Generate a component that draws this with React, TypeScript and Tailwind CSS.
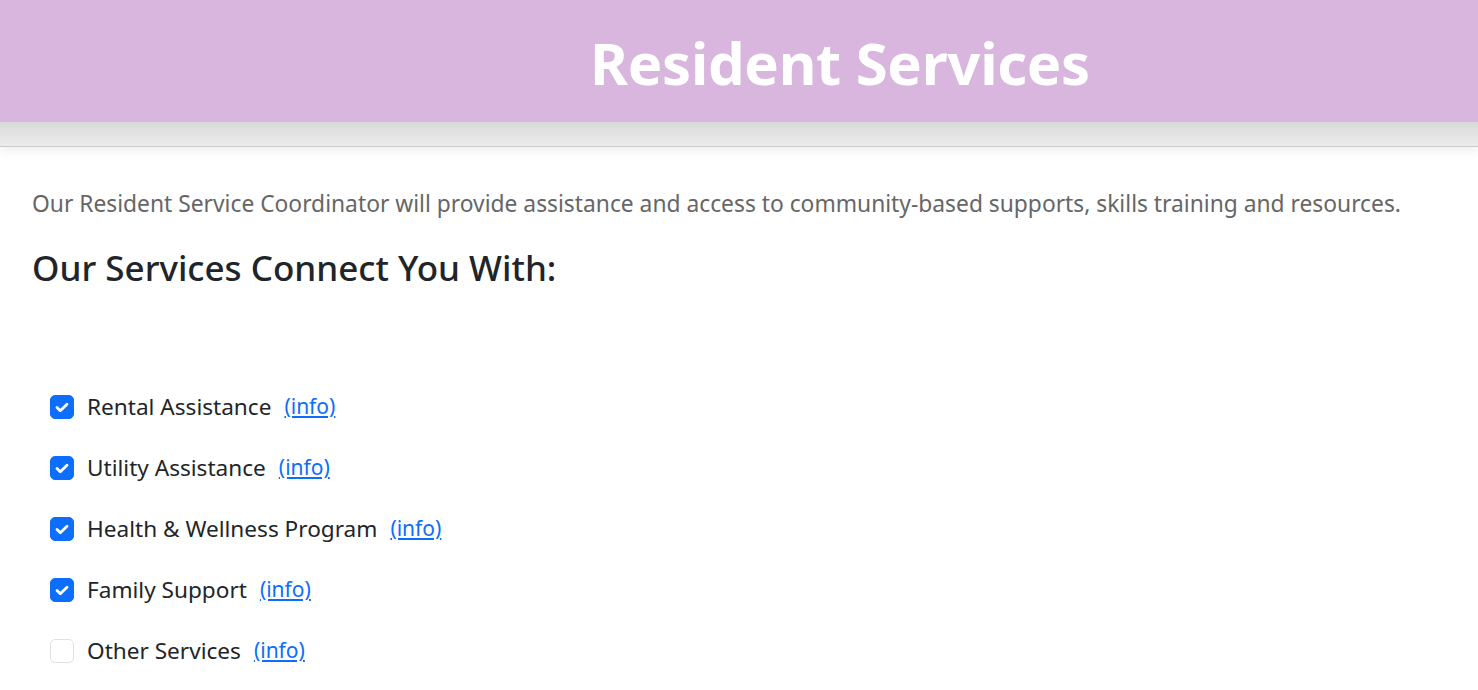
import React, { useState } from "react";

interface Service {
  id: string;
  label: string;
  checked: boolean;
}

const SERVICES: Service[] = [
  { id: "rental", label: "Rental Assistance", checked: true },
  { id: "utility", label: "Utility Assistance", checked: true },
  { id: "health", label: "Health & Wellness Program", checked: true },
  { id: "family", label: "Family Support", checked: true },
  { id: "other", label: "Other Services", checked: false },
];

const App: React.FC = () => {
  const [items, setItems] = useState<Service[]>(SERVICES);

  const toggle = (id: string) =>
    setItems((prev) =>
      prev.map((s) => (s.id === id ? { ...s, checked: !s.checked } : s))
    );

  return (
    <div
      className="min-h-screen bg-white"
      style={{ fontFamily: '"Noto Sans", "Open Sans", sans-serif' }}
    >
      {/* header band */}
      <header className="h-[122px] bg-[#d8b6dd] flex items-center justify-center pl-[202px] pt-[4px]">
        <h1 className="text-[58px] font-bold text-white leading-none tracking-[-0.3px]">
          Resident Services
        </h1>
      </header>
      <div className="h-[25px] bg-gradient-to-b from-[#d8d9da] to-[#ececed] border-b border-[#c9c9c9] shadow-[0_6px_10px_rgba(0,0,0,0.05)]" />

      <main className="px-8 pt-[40px]">
        <p className="text-[22.8px] text-[#666] leading-[33px]">
          Our Resident Service Coordinator will provide assistance and access to
          community-based supports, skills training and resources.
        </p>
        <h2 className="mt-[26px] text-[35px] font-medium text-[#212529] leading-[44px]">
          Our Services Connect You With:
        </h2>

        <ul className="mt-[105px] pl-[18px] flex flex-col gap-[37px]">
          {items.map((s) => (
            <li key={s.id} className="flex items-center h-6">
              <button
                type="button"
                onClick={() => toggle(s.id)}
                className={`w-6 h-6 rounded-[5px] flex items-center justify-center shrink-0 border ${
                  s.checked
                    ? "bg-[#0d6efd] border-[#0d6efd]"
                    : "bg-white border-[#dee2e6]"
                }`}
              >
                {s.checked && (
                  <svg viewBox="0 0 20 20" className="w-[20px] h-[20px]">
                    <path
                      d="M5 10.5l3.3 3.3L15 7.2"
                      fill="none"
                      stroke="#fff"
                      strokeWidth="2.8"
                      strokeLinecap="round"
                      strokeLinejoin="round"
                    />
                  </svg>
                )}
              </button>
              <span className="ml-[13px] text-[22.6px] text-[#212529]">
                {s.label}
              </span>
              <a
                href="#"
                className="ml-[13px] text-[21px] text-[#0d6efd] underline underline-offset-2"
              >
                (info)
              </a>
            </li>
          ))}
        </ul>
      </main>
    </div>
  );
};

export default App;
